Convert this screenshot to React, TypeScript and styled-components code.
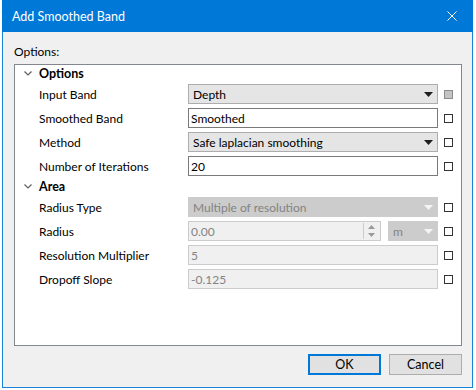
import styled, { createGlobalStyle } from 'styled-components';

const GlobalStyle = createGlobalStyle`
  body {
    margin: 0;
    background: #ffffff;
    font-family: Lato, 'Noto Sans', 'Liberation Sans', sans-serif;
    font-size: 12px;
  }
`;

const Window = styled.div`
  box-sizing: border-box;
  width: 471px;
  height: 388px;
  margin-left: 2px;
  border: 1px solid #1883d7;
  border-top: none;
  background: #f0f0f0;
  display: flex;
  flex-direction: column;
`;

const TitleBar = styled.div`
  height: 32px;
  background: #0078d7;
  color: #ffffff;
  display: flex;
  align-items: center;
  justify-content: space-between;
  padding: 0 6px 0 10px;
  font-size: 12.5px;
  margin: 0 -1px;
`;

const CloseButton = styled.div`
  width: 30px;
  height: 32px;
  display: flex;
  align-items: center;
  justify-content: center;
`;

const Body = styled.div`
  flex: 1;
  display: flex;
  flex-direction: column;
  padding: 10px 10px 0 11px;
`;

const SectionLabel = styled.div`
  color: #000000;
  height: 20px;
  line-height: 20px;
  margin-bottom: 2px;
`;

const Tree = styled.div`
  box-sizing: border-box;
  width: 448px;
  height: 282px;
  border: 1px solid #828790;
  background: #ffffff;
`;

const GroupHeader = styled.div`
  height: 17px;
  display: flex;
  align-items: center;
  font-weight: bold;
  font-size: 12.5px;
  color: #000000;
`;

const Chevron = styled.span`
  width: 24px;
  display: flex;
  justify-content: center;
  padding-left: 2px;
  box-sizing: border-box;
`;

const Row = styled.div`
  height: 24px;
  display: flex;
  align-items: center;
`;

const RowLabel = styled.div`
  width: 149px;
  padding-left: 24px;
  color: #000000;
  white-space: nowrap;
`;

const EditorCell = styled.div`
  width: 250px;
  height: 20px;
  display: flex;
  gap: 7px;
`;

const Field = styled.div<{ $disabled?: boolean; $combo?: boolean; $width?: number }>`
  box-sizing: border-box;
  height: 20px;
  ${({ $width }) => ($width ? `width: ${$width}px;` : 'flex: 1;')}
  border: 1px solid
    ${({ $disabled, $combo }) => ($disabled ? '#cccccc' : $combo ? '#adadad' : '#7a7a7a')};
  background: ${({ $disabled, $combo }) =>
    $combo ? ($disabled ? '#cccccc' : '#e5e5e5') : $disabled ? '#f0f0f0' : '#ffffff'};
  color: ${({ $disabled }) => ($disabled ? '#838383' : '#000000')};
  display: flex;
  align-items: center;
  padding-left: ${({ $combo }) => ($combo ? 4 : 2)}px;
  white-space: nowrap;
  overflow: hidden;
`;

const FieldText = styled.span`
  flex: 1;
`;

const ArrowBox = styled.span`
  width: 17px;
  height: 18px;
  display: flex;
  align-items: center;
  justify-content: center;
`;

const Spinner = styled.span`
  width: 15px;
  height: 16px;
  border-left: 1px solid #cccccc;
  display: flex;
  flex-direction: column;
  align-items: center;
  justify-content: space-around;
  margin-right: 1px;
`;

const Check = styled.div<{ $grey?: boolean }>`
  box-sizing: border-box;
  width: 9px;
  height: 9px;
  margin-left: 6px;
  border: 1px solid ${({ $grey }) => ($grey ? '#8c8c8c' : '#333333')};
  background: ${({ $grey }) => ($grey ? '#c4c4c4' : '#ffffff')};
`;

const Footer = styled.div`
  display: flex;
  justify-content: flex-end;
  gap: 8px;
  padding: 8px 0 0 0;
`;

const Button = styled.button<{ $default?: boolean }>`
  box-sizing: border-box;
  width: 73px;
  height: 21px;
  margin: 0;
  padding: 0;
  font-family: inherit;
  font-size: 12.5px;
  color: #000000;
  background: #e1e1e1;
  border: ${({ $default }) => ($default ? '2px solid #0078d7' : '1px solid #adadad')};
`;

const DownArrow = ({ color }: { color: string }) => (
  <svg width="9" height="5" viewBox="0 0 9 5">
    <polygon points="0,0 9,0 4.5,5" fill={color} />
  </svg>
);

const ChevronIcon = () => (
  <svg width="8" height="5" viewBox="0 0 8 5">
    <polyline points="0.5,0.5 4,4 7.5,0.5" fill="none" stroke="#606060" strokeWidth="1.2" />
  </svg>
);

type Prop = {
  label: string;
  value: string;
  kind: 'combo' | 'text' | 'spin';
  disabled?: boolean;
  greyCheck?: boolean;
};

const optionRows: Prop[] = [
  { label: 'Input Band', value: 'Depth', kind: 'combo', greyCheck: true },
  { label: 'Smoothed Band', value: 'Smoothed', kind: 'text' },
  { label: 'Method', value: 'Safe laplacian smoothing', kind: 'combo' },
  { label: 'Number of Iterations', value: '20', kind: 'text' },
];

const areaRows: Prop[] = [
  { label: 'Radius Type', value: 'Multiple of resolution', kind: 'combo', disabled: true },
  { label: 'Radius', value: '0.00', kind: 'spin', disabled: true },
  { label: 'Resolution Multiplier', value: '5', kind: 'text', disabled: true },
  { label: 'Dropoff Slope', value: '-0.125', kind: 'text', disabled: true },
];

const Editor = ({ p }: { p: Prop }) => {
  if (p.kind === 'combo') {
    return (
      <Field $combo $disabled={p.disabled}>
        <FieldText>{p.value}</FieldText>
        <ArrowBox>
          <DownArrow color={p.disabled ? '#f4f4f4' : '#1e1e1e'} />
        </ArrowBox>
      </Field>
    );
  }
  if (p.kind === 'spin') {
    return (
      <>
        <Field $disabled={p.disabled} $width={193}>
          <FieldText>{p.value}</FieldText>
          <Spinner>
            <svg width="7" height="4" viewBox="0 0 7 4">
              <polygon points="0,4 7,4 3.5,0" fill="#9a9a9a" />
            </svg>
            <svg width="7" height="4" viewBox="0 0 7 4">
              <polygon points="0,0 7,0 3.5,4" fill="#9a9a9a" />
            </svg>
          </Spinner>
        </Field>
        <Field $combo $disabled>
          <FieldText>m</FieldText>
          <ArrowBox>
            <DownArrow color="#f4f4f4" />
          </ArrowBox>
        </Field>
      </>
    );
  }
  return (
    <Field $disabled={p.disabled}>
      <FieldText>{p.value}</FieldText>
    </Field>
  );
};

const PropRow = ({ p }: { p: Prop }) => (
  <Row>
    <RowLabel>{p.label}</RowLabel>
    <EditorCell>
      <Editor p={p} />
    </EditorCell>
    <Check $grey={p.greyCheck} />
  </Row>
);

const App = () => (
  <>
    <GlobalStyle />
    <Window>
      <TitleBar>
        <span>Add Smoothed Band</span>
        <CloseButton>
          <svg width="10" height="10" viewBox="0 0 10 10">
            <path d="M0.5 0.5 L9.5 9.5 M9.5 0.5 L0.5 9.5" stroke="#ffffff" strokeWidth="1" />
          </svg>
        </CloseButton>
      </TitleBar>
      <Body>
        <SectionLabel>Options:</SectionLabel>
        <Tree>
          <GroupHeader>
            <Chevron>
              <ChevronIcon />
            </Chevron>
            Options
          </GroupHeader>
          {optionRows.map((p) => (
            <PropRow key={p.label} p={p} />
          ))}
          <GroupHeader>
            <Chevron>
              <ChevronIcon />
            </Chevron>
            Area
          </GroupHeader>
          {areaRows.map((p) => (
            <PropRow key={p.label} p={p} />
          ))}
        </Tree>
        <Footer>
          <Button $default>OK</Button>
          <Button>Cancel</Button>
        </Footer>
      </Body>
    </Window>
  </>
);

export default App;
